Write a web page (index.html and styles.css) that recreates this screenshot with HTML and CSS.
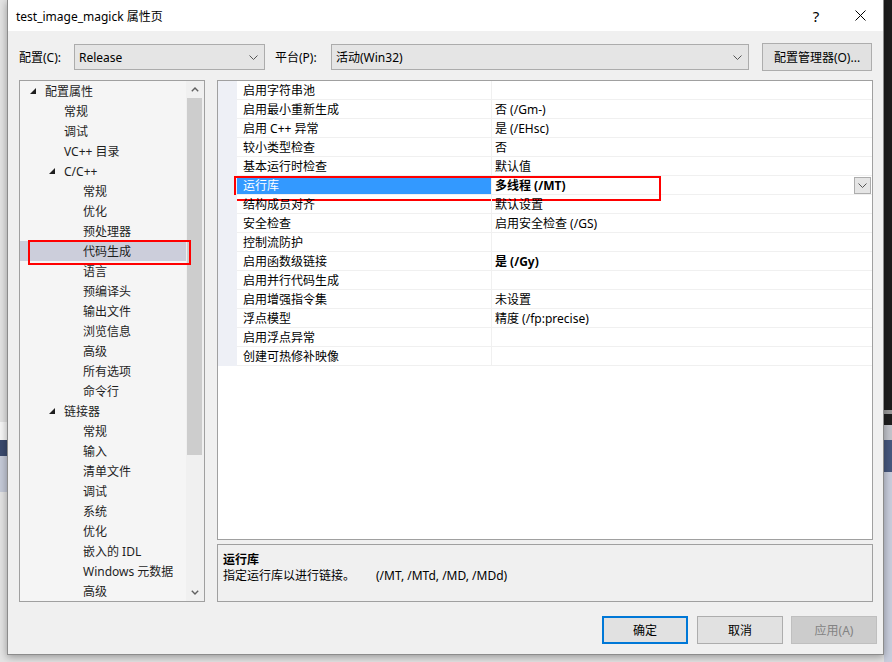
FILE: index.html
```html
<!DOCTYPE html>
<html lang="zh-CN">

<head>
  <meta charset="UTF-8" />
  <title>test_image_magick 属性页</title>
  <link rel="stylesheet" href="styles.css">
</head>

<body>
  <!-- 背后的编辑器窗口 -->
  <div class="editor"></div>
  <div class="peek"></div>

  <div class="dialog">

    <!-- 标题栏 -->
    <div class="titlebar">
      <span class="title">test_image_magick 属性页</span>
      <span class="tb-btn help">?</span>
      <span class="tb-btn close">
        <svg width="11" height="11" viewBox="0 0 11 11"><path d="M0.5 0.5 L10.5 10.5 M10.5 0.5 L0.5 10.5" stroke="#000" stroke-width="1" fill="none"/></svg>
      </span>
    </div>

    <div class="body">

      <!-- 配置 / 平台 -->
      <div class="config-row">
        <label class="lbl lbl-config">配置(C):</label>
        <div class="combo combo-config">
          <span>Release</span>
          <svg width="9" height="5" viewBox="0 0 9 5"><polyline points="0.5,0.5 4.5,4.5 8.5,0.5" stroke="#555" fill="none"/></svg>
        </div>
        <label class="lbl lbl-platform">平台(P):</label>
        <div class="combo combo-platform">
          <span>活动(Win32)</span>
          <svg width="9" height="5" viewBox="0 0 9 5"><polyline points="0.5,0.5 4.5,4.5 8.5,0.5" stroke="#555" fill="none"/></svg>
        </div>
        <button class="btn btn-manager">配置管理器(O)...</button>
      </div>

      <div class="main">

        <!-- 左侧树 -->
        <div class="tree">
          <ul class="tree-list">
            <li class="tree-item lvl0"><span class="exp"><svg width="6" height="6" viewBox="0 0 6 6"><polygon points="6,0 6,6 0,6" fill="#1e1e1e"/></svg></span>配置属性</li>
            <li class="tree-item lvl1"><span class="exp"></span>常规</li>
            <li class="tree-item lvl1"><span class="exp"></span>调试</li>
            <li class="tree-item lvl1"><span class="exp"></span>VC++ 目录</li>
            <li class="tree-item lvl1 branch"><span class="exp"><svg width="6" height="6" viewBox="0 0 6 6"><polygon points="6,0 6,6 0,6" fill="#1e1e1e"/></svg></span>C/C++</li>
            <li class="tree-item lvl2"><span class="exp"></span>常规</li>
            <li class="tree-item lvl2"><span class="exp"></span>优化</li>
            <li class="tree-item lvl2"><span class="exp"></span>预处理器</li>
            <li class="tree-item lvl2 selected"><span class="exp"></span>代码生成</li>
            <li class="tree-item lvl2"><span class="exp"></span>语言</li>
            <li class="tree-item lvl2"><span class="exp"></span>预编译头</li>
            <li class="tree-item lvl2"><span class="exp"></span>输出文件</li>
            <li class="tree-item lvl2"><span class="exp"></span>浏览信息</li>
            <li class="tree-item lvl2"><span class="exp"></span>高级</li>
            <li class="tree-item lvl2"><span class="exp"></span>所有选项</li>
            <li class="tree-item lvl2"><span class="exp"></span>命令行</li>
            <li class="tree-item lvl1 branch"><span class="exp"><svg width="6" height="6" viewBox="0 0 6 6"><polygon points="6,0 6,6 0,6" fill="#1e1e1e"/></svg></span>链接器</li>
            <li class="tree-item lvl2"><span class="exp"></span>常规</li>
            <li class="tree-item lvl2"><span class="exp"></span>输入</li>
            <li class="tree-item lvl2"><span class="exp"></span>清单文件</li>
            <li class="tree-item lvl2"><span class="exp"></span>调试</li>
            <li class="tree-item lvl2"><span class="exp"></span>系统</li>
            <li class="tree-item lvl2"><span class="exp"></span>优化</li>
            <li class="tree-item lvl2"><span class="exp"></span>嵌入的 IDL</li>
            <li class="tree-item lvl2"><span class="exp"></span>Windows 元数据</li>
            <li class="tree-item lvl2"><span class="exp"></span>高级</li>
          </ul>
          <div class="vscroll">
            <div class="sb-arrow">
              <svg width="8" height="5" viewBox="0 0 8 5"><polyline points="0.8,4.2 4,1 7.2,4.2" stroke="#606060" stroke-width="1.4" fill="none"/></svg>
            </div>
            <div class="sb-track"><div class="sb-thumb"></div></div>
            <div class="sb-arrow">
              <svg width="8" height="5" viewBox="0 0 8 5"><polyline points="0.8,0.8 4,4 7.2,0.8" stroke="#606060" stroke-width="1.4" fill="none"/></svg>
            </div>
          </div>
        </div>

        <!-- 右侧属性表 -->
        <div class="right">
          <div class="grid">
            <div class="prop-row"><span class="prop-gutter"></span><span class="prop-name">启用字符串池</span><span class="prop-value"></span></div>
            <div class="prop-row"><span class="prop-gutter"></span><span class="prop-name">启用最小重新生成</span><span class="prop-value">否 (/Gm-)</span></div>
            <div class="prop-row"><span class="prop-gutter"></span><span class="prop-name">启用 C++ 异常</span><span class="prop-value">是 (/EHsc)</span></div>
            <div class="prop-row"><span class="prop-gutter"></span><span class="prop-name">较小类型检查</span><span class="prop-value">否</span></div>
            <div class="prop-row"><span class="prop-gutter"></span><span class="prop-name">基本运行时检查</span><span class="prop-value">默认值</span></div>
            <div class="prop-row selected"><span class="prop-gutter"></span><span class="prop-name">运行库</span><span class="prop-value bold"><span>多线程 (/MT)</span><span class="dd-btn"><svg width="9" height="5" viewBox="0 0 9 5"><polyline points="0.5,0.5 4.5,4.5 8.5,0.5" stroke="#555" fill="none"/></svg></span></span></div>
            <div class="prop-row"><span class="prop-gutter"></span><span class="prop-name">结构成员对齐</span><span class="prop-value">默认设置</span></div>
            <div class="prop-row"><span class="prop-gutter"></span><span class="prop-name">安全检查</span><span class="prop-value">启用安全检查 (/GS)</span></div>
            <div class="prop-row"><span class="prop-gutter"></span><span class="prop-name">控制流防护</span><span class="prop-value"></span></div>
            <div class="prop-row"><span class="prop-gutter"></span><span class="prop-name">启用函数级链接</span><span class="prop-value bold">是 (/Gy)</span></div>
            <div class="prop-row"><span class="prop-gutter"></span><span class="prop-name">启用并行代码生成</span><span class="prop-value"></span></div>
            <div class="prop-row"><span class="prop-gutter"></span><span class="prop-name">启用增强指令集</span><span class="prop-value">未设置</span></div>
            <div class="prop-row"><span class="prop-gutter"></span><span class="prop-name">浮点模型</span><span class="prop-value">精度 (/fp:precise)</span></div>
            <div class="prop-row"><span class="prop-gutter"></span><span class="prop-name">启用浮点异常</span><span class="prop-value"></span></div>
            <div class="prop-row"><span class="prop-gutter"></span><span class="prop-name">创建可热修补映像</span><span class="prop-value"></span></div>
          </div>

          <!-- 说明 -->
          <div class="desc">
            <p class="desc-title">运行库</p>
            <p><span class="desc-text">指定运行库以进行链接。</span>(/MT, /MTd, /MD, /MDd)</p>
          </div>
        </div>

      </div>

      <!-- 底部按钮 -->
      <div class="actions">
        <button class="btn btn-ok">确定</button>
        <button class="btn btn-cancel">取消</button>
        <button class="btn btn-apply" disabled>应用(A)</button>
      </div>

    </div>
  </div>
</body>

</html>
```

FILE: styles.css
```css
* {
  margin: 0;
  padding: 0;
  box-sizing: border-box;
}

ul {
  list-style: none;
}

body {
  position: relative;
  width: 892px;
  height: 662px;
  overflow: hidden;
  background: #e4e4e4;
  font: 12px "Noto Sans", "Noto Sans CJK SC", sans-serif;
  color: #000;
}

/* 背景窗口 */
.editor {
  position: absolute;
  left: 884px;
  top: 0;
  width: 8px;
  height: 662px;
  background: linear-gradient(#1e1e1e 0 410px, #9a9a9a 410px 414px, #1e1e1e 414px 425px, #c3c5cc 425px 440px, #46587e 440px 472px, #c9cedd 472px);
}

.peek {
  position: absolute;
  left: 0;
  top: 422px;
  width: 7px;
  height: 70px;
  background: linear-gradient(#f7f7f7 0 18px, #3a4a6e 18px 34px, #c5cad8 34px);
}

/* 对话框 */
.dialog {
  position: absolute;
  left: 7px;
  top: 0;
  width: 877px;
  height: 655px;
  background: #f0f0f0;
  border: 1px solid #8c8c8c;
  border-top: none;
  box-shadow: 0 2px 8px rgba(0, 0, 0, 0.35);
  display: flex;
  flex-direction: column;
}

.titlebar {
  height: 31px;
  background: #fff;
  display: flex;
  align-items: center;
}

.title {
  flex: 1;
  padding-left: 8px;
}

.tb-btn {
  width: 45px;
  height: 31px;
  display: flex;
  align-items: center;
  justify-content: center;
}

.help {
  font-size: 15px;
  padding-left: 3px;
}

.close {
  width: 46px;
}

.body {
  flex: 1;
  padding: 13px 6px 0 11px;
  display: flex;
  flex-direction: column;
}

/* 配置行 */
.config-row {
  height: 26px;
  display: flex;
  align-items: center;
}

.lbl-config {
  width: 55px;
}

.lbl-platform {
  width: 56px;
  margin-left: 10px;
}

.combo {
  height: 26px;
  border: 1px solid #acacac;
  background: #e5e5e5;
  display: flex;
  align-items: center;
  justify-content: space-between;
  padding: 0 6px 0 4px;
}

.combo-config {
  width: 191px;
}

.combo-platform {
  width: 418px;
}

.btn {
  height: 28px;
  border: 1px solid #adadad;
  background: #e1e1e1;
  font: inherit;
  color: #000;
}

.btn-manager {
  width: 110px;
  margin-left: 13px;
}

/* 主区域 */
.main {
  height: 522px;
  margin-top: 10px;
  display: flex;
  gap: 12px;
}

.tree {
  width: 186px;
  border: 1px solid #a0a0a0;
  background: #f5f5f5;
  display: flex;
}

.tree-list {
  width: 166px;
  color: #1e1e1e;
}

.tree-item {
  position: relative;
  height: 20px;
  display: flex;
  align-items: center;
  white-space: nowrap;
}

.tree-item .exp {
  width: 15px;
  display: flex;
  align-items: center;
}

.lvl0 {
  padding-left: 10px;
}

.lvl1 {
  padding-left: 29px;
}

.lvl2 {
  padding-left: 48px;
}

.tree-item.selected {
  background: #cccedb;
}

.tree-item.selected::after {
  content: "";
  position: absolute;
  left: 8px;
  top: -1px;
  width: 159px;
  height: 21px;
  border: 2px solid #f00;
}

.vscroll {
  width: 18px;
  display: flex;
  flex-direction: column;
  background: #f0f0f0;
}

.sb-arrow {
  height: 17px;
  display: flex;
  align-items: center;
  justify-content: center;
  padding-right: 1px;
}

.sb-track {
  flex: 1;
}

.sb-thumb {
  height: 357px;
  margin: 0 2px 0 1px;
  background: #cdcdcd;
}

.right {
  width: 656px;
  display: flex;
  flex-direction: column;
  gap: 4px;
}

/* 属性表 */
.grid {
  height: 460px;
  border: 1px solid #a0a0a0;
  background: #fff;
}

.prop-row {
  position: relative;
  height: 19px;
  display: flex;
}

.prop-gutter {
  width: 19px;
  background: #eef0f6;
}

.prop-name {
  width: 255px;
  padding: 1px 0 0 6px;
  line-height: 17px;
  border-right: 1px solid #f0f0f0;
  border-bottom: 1px solid #f0f0f0;
  white-space: nowrap;
}

.prop-value {
  flex: 1;
  padding: 1px 0 0 3px;
  line-height: 17px;
  display: flex;
  align-items: center;
  border-bottom: 1px solid #f0f0f0;
  white-space: nowrap;
}

.prop-value.bold {
  font-weight: bold;
}

.prop-row.selected .prop-name {
  background: #3399ff;
  color: #fff;
}

.prop-row.selected::after {
  content: "";
  position: absolute;
  left: 16px;
  top: 0;
  width: 423px;
  height: 21px;
  border: 2px solid #f00;
}

.dd-btn {
  width: 17px;
  height: 17px;
  margin: -1px 1px 0 auto;
  border: 1px solid #adadad;
  background: #e5e5e5;
  display: flex;
  align-items: center;
  justify-content: center;
}

/* 说明 */
.desc {
  flex: 1;
  border: 1px solid #a0a0a0;
  padding: 7px 5px 0;
  line-height: 16px;
}

.desc-title {
  font-weight: bold;
}

.desc-text {
  display: inline-block;
  width: 153px;
}

/* 底部按钮 */
.actions {
  margin-top: 14px;
  display: flex;
  justify-content: flex-end;
}

.actions .btn {
  width: 86px;
}

.btn-ok {
  border: 2px solid #0078d7;
  margin-right: 9px;
}

.btn-cancel {
  margin-right: 8px;
}

.btn-apply {
  background: #cccccc;
  border-color: #bfbfbf;
  color: #838383;
}
```
